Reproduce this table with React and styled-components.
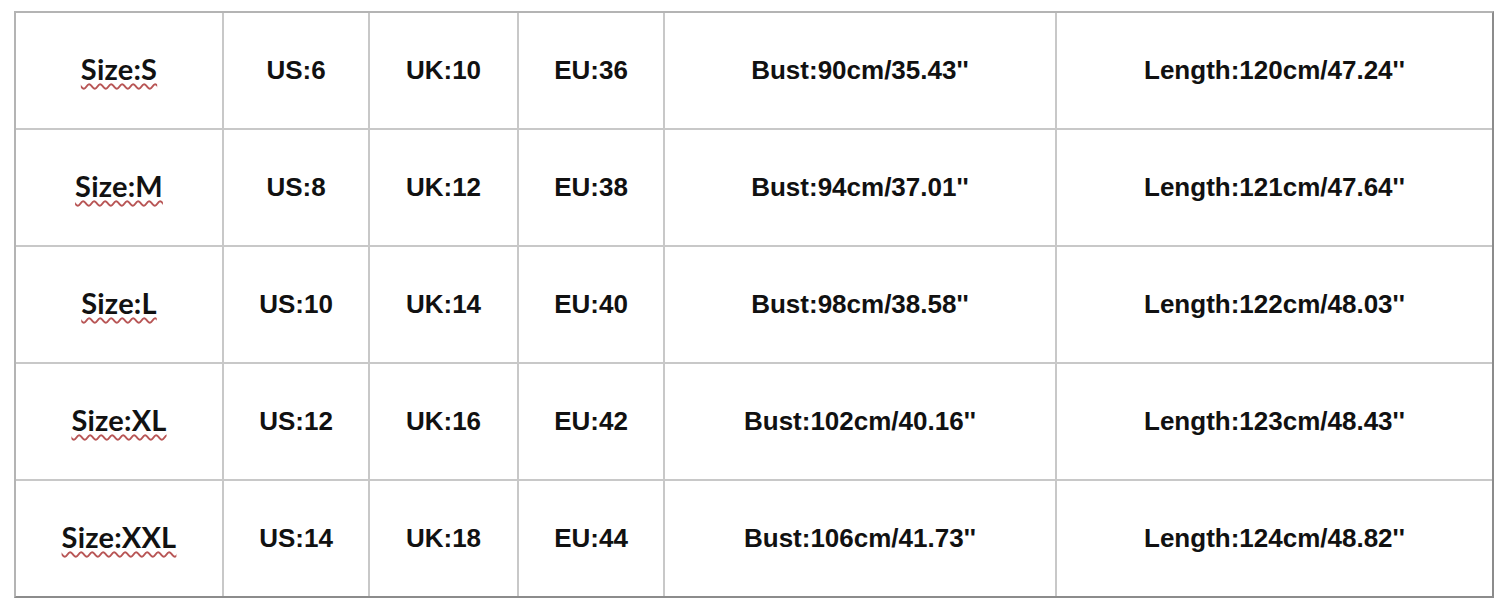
import React from "react";
import styled, { createGlobalStyle } from "styled-components";

const Global = createGlobalStyle`
  html, body { margin: 0; padding: 0; background: #ffffff; }
  body { font-family: "Liberation Sans", Arial, sans-serif; }
`;

const Page = styled.div`
  width: 1500px;
  height: 608px;
  padding: 11px 0 0 14px;
  box-sizing: border-box;
  background: #ffffff;
`;

const Table = styled.div`
  width: 1480px;
  display: flex;
  flex-direction: column;
  gap: 2px;
  background: #c8c8c8;
  border-top: 2px solid #b4b4b4;
  border-left: 2px solid #b4b4b4;
  border-right: 2px solid #8c8c8c;
  border-bottom: 2px solid #8c8c8c;
  box-sizing: border-box;
`;

const Row = styled.div`
  display: grid;
  grid-template-columns: 206px 144px 147px 144px 390px 435px;
  column-gap: 2px;
  height: 115px;
`;

const Cell = styled.div`
  background: #ffffff;
  display: flex;
  align-items: center;
  justify-content: center;
  color: #111111;
  font-family: "Liberation Sans", Arial, sans-serif;
  font-weight: 700;
  font-size: 26px;
  white-space: nowrap;
`;

const SizeLabel = styled.span`
  font-family: Lato, "Open Sans", sans-serif;
  font-weight: 700;
  font-size: 29px;
  letter-spacing: 0.2px;
  color: #121212;
  text-decoration: underline wavy #b85555;
  text-decoration-thickness: 1.5px;
  text-underline-offset: 3px;
  transform: translateY(-2px);
`;

const rows = [
  ["Size:S", "US:6", "UK:10", "EU:36", "Bust:90cm/35.43''", "Length:120cm/47.24''"],
  ["Size:M", "US:8", "UK:12", "EU:38", "Bust:94cm/37.01''", "Length:121cm/47.64''"],
  ["Size:L", "US:10", "UK:14", "EU:40", "Bust:98cm/38.58''", "Length:122cm/48.03''"],
  ["Size:XL", "US:12", "UK:16", "EU:42", "Bust:102cm/40.16''", "Length:123cm/48.43''"],
  ["Size:XXL", "US:14", "UK:18", "EU:44", "Bust:106cm/41.73''", "Length:124cm/48.82''"],
];

export default function App() {
  return (
    <Page>
      <Global />
      <Table>
        {rows.map((r) => (
          <Row key={r[0]}>
            <Cell>
              <SizeLabel>{r[0]}</SizeLabel>
            </Cell>
            {r.slice(1).map((v) => (
              <Cell key={v}>{v}</Cell>
            ))}
          </Row>
        ))}
      </Table>
    </Page>
  );
}
